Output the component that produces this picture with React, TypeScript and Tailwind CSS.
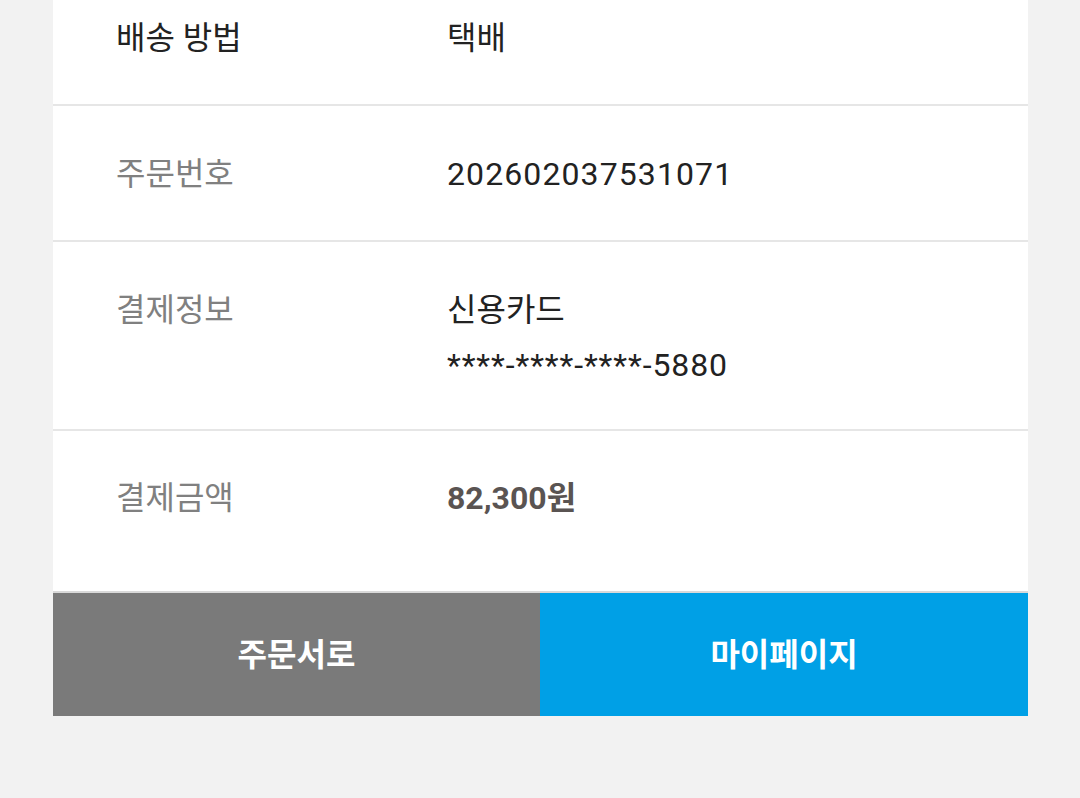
import React from "react";

const font = { fontFamily: "Roboto, 'Noto Sans CJK KR', sans-serif" };

function Row({ label, labelClass, children, className }: { label: string; labelClass: string; children: React.ReactNode; className: string }) {
  return (
    <div className={`flex border-b-2 border-[#e6e6e6] pl-[63px] ${className}`}>
      <div className={`w-[331px] shrink-0 text-[32px] leading-[36px] ${labelClass}`}>{label}</div>
      <div className="flex flex-col">{children}</div>
    </div>
  );
}

export default function App() {
  return (
    <div className="min-h-[798px] w-[1080px] overflow-hidden bg-[#f2f2f2]" style={font}>
      <div className="ml-[53px] mt-[-32px] w-[975px] bg-white">
        <Row label="배송 방법" labelClass="text-[#222222]" className="pt-[52px] pb-[48px]">
          <span className="text-[32px] leading-[36px] text-[#222222]">택배</span>
        </Row>
        <Row label="주문번호" labelClass="text-[#808080]" className="pt-[50px] pb-[48px]">
          <span className="text-[32px] leading-[36px] tracking-[1.1px] text-[#222222]">202602037531071</span>
        </Row>
        <Row label="결제정보" labelClass="text-[#808080]" className="pt-[50px] pb-[46px]">
          <span className="text-[32px] leading-[36px] text-[#222222]">신용카드</span>
          <span className="mt-[19px] text-[32px] leading-[36px] tracking-[0.9px] text-[#222222]">****-****-****-5880</span>
        </Row>
        <div className="flex pl-[63px] pt-[49px] pb-[75px]">
          <div className="w-[331px] shrink-0 text-[32px] leading-[36px] text-[#808080]">결제금액</div>
          <span className="text-[32px] font-bold leading-[36px] text-[#5a5452]">82,300원</span>
        </div>
      </div>
      <div className="ml-[53px] flex h-[125px] w-[975px] border-t-2 border-[#d9d9d9]">
        <button className="flex w-[487px] items-center justify-center bg-[#7a7a7a] text-[32px] font-bold text-white">주문서로</button>
        <button className="flex flex-1 items-center justify-center bg-[#00a0e6] text-[32px] font-bold text-white">마이페이지</button>
      </div>
    </div>
  );
}
